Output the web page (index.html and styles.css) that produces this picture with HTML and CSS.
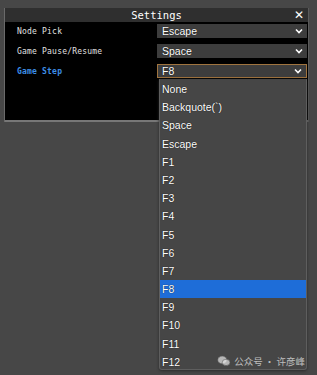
FILE: index.html
```html
<!DOCTYPE html>
<html lang="en">

<head>
  <meta charset="UTF-8">
  <title>Settings</title>
  <link rel="stylesheet" href="styles.css">
</head>

<body>

  <div class="win">
    <div class="title">
      <span>Settings</span>
      <span class="close">&#x2715;</span>
    </div>
    <div class="content">
      <div class="row">
        <span class="label">Node Pick</span>
        <div class="select"><span>Escape</span><svg viewBox="0 0 8 6"><path d="M1 1.5 4 4.5 7 1.5" /></svg></div>
      </div>
      <div class="row">
        <span class="label">Game Pause/Resume</span>
        <div class="select"><span>Space</span><svg viewBox="0 0 8 6"><path d="M1 1.5 4 4.5 7 1.5" /></svg></div>
      </div>
      <div class="row">
        <span class="label active">Game Step</span>
        <div class="select open"><span>F8</span><svg viewBox="0 0 8 6"><path d="M1 1.5 4 4.5 7 1.5" /></svg>
          <ul class="list">
            <li>None</li>
            <li>Backquote(`)</li>
            <li>Space</li>
            <li>Escape</li>
            <li>F1</li>
            <li>F2</li>
            <li>F3</li>
            <li>F4</li>
            <li>F5</li>
            <li>F6</li>
            <li>F7</li>
            <li class="sel">F8</li>
            <li>F9</li>
            <li>F10</li>
            <li>F11</li>
            <li>F12</li>
          </ul>
        </div>
      </div>
    </div>
  </div>

  <div class="mark">
    <svg viewBox="0 0 20 16">
      <ellipse cx="7.5" cy="6.5" rx="6.5" ry="5.5" />
      <ellipse cx="13" cy="10" rx="5.5" ry="4.5" />
    </svg>
    <span>公众号 · 许彦峰</span>
  </div>

</body>

</html>
```

FILE: styles.css
```css
* {
  margin: 0;
  padding: 0;
  box-sizing: border-box;
}

body {
  width: 317px;
  height: 375px;
  overflow: hidden;
  background: #474747;
  position: relative;
  font-family: "DejaVu Sans Mono", monospace;
}

.win {
  margin: 8px 0 0 4px;
  width: 305px;
  border-left: 1px solid #6a6a6a;
  border-right: 1px solid #5a5a5a;
}

.title {
  height: 14px;
  background: #2f2f2f;
  color: #fff;
  font-size: 10.5px;
  line-height: 14px;
  text-align: center;
  position: relative;
}

.title .close {
  position: absolute;
  right: 4px;
  top: 0;
  font-family: "DejaVu Sans", sans-serif;
  font-size: 12px;
  font-weight: bold;
}

.content {
  background: #000;
  height: 100px;
  padding-top: 2px;
  border-bottom: 2px solid #777;
}

.row {
  display: flex;
  align-items: center;
  height: 20px;
  padding-bottom: 6px;
}

.label {
  width: 152px;
  padding-left: 12px;
  color: #e0e0e0;
  font-size: 8px;
  letter-spacing: 0.2px;
}

.label.active {
  color: #3d8fe8;
  font-weight: bold;
}

.select {
  width: 150px;
  height: 14px;
  background: #3d3d3d;
  color: #fff;
  display: flex;
  align-items: center;
  justify-content: space-between;
  padding: 0 4px 0 5px;
  font-family: "Liberation Sans", Arial, sans-serif;
  font-size: 10.5px;
  text-shadow: 0 0 1px #000;
  position: relative;
}

.select svg {
  width: 8px;
  height: 6px;
  fill: none;
  stroke: #fff;
  stroke-width: 1.6;
}

.select.open {
  border: 1px solid #a0743f;
  padding-left: 4px;
}

.list {
  position: absolute;
  left: 1px;
  top: 14px;
  width: 148px;
  height: 291px;
  list-style: none;
  background: #464646;
  border: 1px solid #5e5e5e;
  border-top: none;
  border-radius: 0 0 3px 3px;
  box-shadow: 0 1px 3px #2a2a2a;
  padding-top: 1px;
}

.list li {
  height: 18.2px;
  line-height: 18px;
  padding-left: 2px;
}

.list li.sel {
  background: #1e6dd8;
}

.mark {
  position: absolute;
  right: 12px;
  bottom: 7px;
  display: flex;
  align-items: center;
  gap: 3px;
  color: rgba(230, 230, 230, 0.75);
  font-family: "Noto Sans CJK SC", sans-serif;
  font-size: 9.5px;
}

.mark svg {
  width: 14px;
  height: 12px;
  fill: rgba(230, 230, 230, 0.7);
  stroke: #555;
  stroke-width: 0.8;
}
```
